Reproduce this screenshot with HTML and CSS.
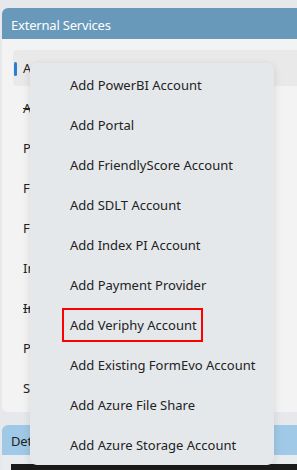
FILE: index.html
```html
<!DOCTYPE html>
<html lang="en">
<head>
    <meta charset="UTF-8">
    <title>External Services</title>
    <link rel="stylesheet" href="styles.css">
</head>
<body>
    <div class="panel">
        <div class="panel-header">External Services</div>
        <div class="panel-body">
            <div class="row selected">Azure Blob Storage</div>
            <div class="row disabled">Azure File Share</div>
            <div class="row">PowerBI</div>
            <div class="row">FriendlyScore</div>
            <div class="row">FormEvo</div>
            <div class="row">Index PI</div>
            <div class="row disabled">Index PI (old)</div>
            <div class="row">Payment Provider</div>
            <div class="row">SDLT</div>
        </div>
    </div>
    <div class="panel second">
        <div class="panel-header light">Details</div>
        <div class="panel-body dark-area">
            <div class="console"></div>
        </div>
    </div>

    <!-- context menu -->
    <div class="menu">
        <div class="menu-item">Add PowerBI Account</div>
        <div class="menu-item">Add Portal</div>
        <div class="menu-item">Add FriendlyScore Account</div>
        <div class="menu-item">Add SDLT Account</div>
        <div class="menu-item">Add Index PI Account</div>
        <div class="menu-item">Add Payment Provider</div>
        <div class="menu-item"><span class="highlight">Add Veriphy Account</span></div>
        <div class="menu-item">Add Existing FormEvo Account</div>
        <div class="menu-item">Add Azure File Share</div>
        <div class="menu-item">Add Azure Storage Account</div>
    </div>
</body>
</html>
```
FILE: styles.css
```css
/* base */
body {
    margin: 0;
    height: 470px;
    overflow: hidden;
    background-color: #e6e8eb;
    font-family: "Noto Sans", "Open Sans", sans-serif;
    font-size: 13px;
    color: #222;
    position: relative;
}

.panel {
    margin: 8px 0 0 2px;
    background-color: #f3f3f3;
    border-radius: 6px 0 0 6px;
}

.panel-header {
    height: 31px;
    line-height: 34px;
    padding-left: 9px;
    background-color: #6899ba;
    color: #fff;
    font-size: 13px;
    letter-spacing: -0.2px;
    border-radius: 6px 0 0 0;
}

.panel-body {
    display: flex;
    flex-direction: column;
    gap: 4px;
    padding: 11px 0 6px 11px;
}

.row {
    position: relative;
    height: 36px;
    line-height: 36px;
    padding-left: 10px;
    white-space: nowrap;
}

.row.selected {
    background-color: #e9e9e9;
    border-radius: 4px 0 0 4px;
}

.row.selected::before {
    content: "";
    position: absolute;
    left: 1px;
    top: 12px;
    width: 3px;
    height: 14px;
    border-radius: 2px;
    background-color: #2b7fd2;
}

.row.disabled {
    text-decoration: line-through;
}

/* second panel */
.panel.second {
    margin-top: 13px;
    background-color: #e9ecef;
}

.panel-header.light {
    height: 30px;
    line-height: 32px;
    background-color: #9fc9e6;
    color: #222;
}

.dark-area {
    padding: 9px 0 0 9px;
}

.console {
    height: 40px;
    background-color: #1b1b1b;
}

/* context menu */
.menu {
    position: absolute;
    left: 30px;
    top: 63px;
    width: 244px;
    padding-top: 2px;
    background-color: #e5e8eb;
    border-radius: 7px;
    box-shadow: 0 2px 8px rgba(0, 0, 0, 0.12);
}

.menu-item {
    height: 40px;
    line-height: 40px;
    padding-left: 40px;
    white-space: nowrap;
}

.highlight {
    display: inline-block;
    line-height: 30px;
    margin-left: -8px;
    padding: 0 4px 0 6px;
    border: 2px solid #ff0000;
}
```
